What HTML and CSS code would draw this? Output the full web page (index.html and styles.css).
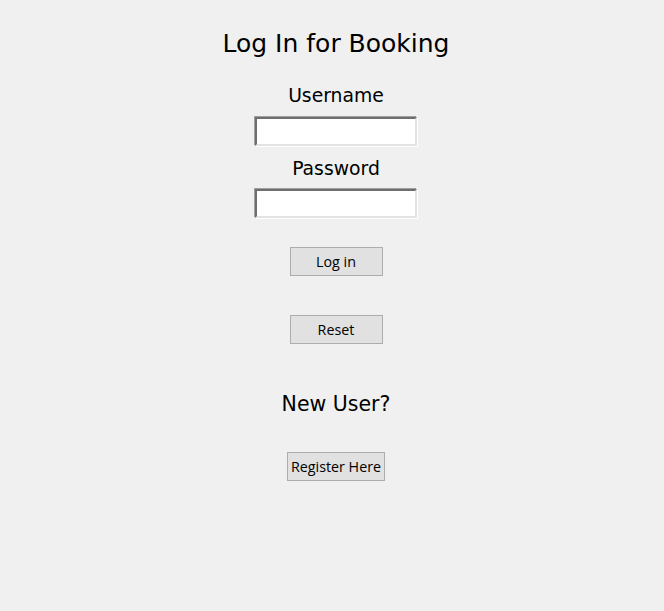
FILE: index.html
```html
<!DOCTYPE html>
<html>
<head>
<meta charset="utf-8">
<link rel="stylesheet" href="styles.css">
</head>
<body>
<div class="form">
  <div class="title">Log In for Booking</div>
  <div class="label user-label">Username</div>
  <input class="entry user-entry" type="text">
  <div class="label pass-label">Password</div>
  <input class="entry pass-entry" type="password">
  <button class="btn login">Log in</button>
  <button class="btn reset">Reset</button>
  <div class="newuser">New User?</div>
  <button class="btn register">Register Here</button>
</div>
</body>
</html>
```
FILE: styles.css
```css
html, body {
  margin: 0;
  padding: 0;
  background: #f0f0f0;
  height: 100%;
}
.form {
  display: flex;
  flex-direction: column;
  align-items: center;
  padding-top: 29px;
  padding-left: 8px;
  font-family: "DejaVu Sans", Verdana, sans-serif;
  color: #000;
}
.title {
  font-size: 25px;
  line-height: 30px;
  height: 30px;
}
.label {
  font-size: 18.8px;
  line-height: 22px;
  height: 22px;
}
.user-label { margin-top: 25px; padding-top: 1px; }
.pass-label { margin-top: 11px; padding-top: 1px; }
.label { box-sizing: content-box; height: 21px; }
.entry {
  box-sizing: border-box;
  width: 162px;
  height: 29px;
  padding: 0;
  background: #fff;
  border-style: solid;
  border-width: 2px 2px 2px 2px;
  border-color: #6e6e6e #e3e3e3 #e3e3e3 #6e6e6e;
  box-shadow: -1px -1px 0 #a0a0a0, 1px 1px 0 #ffffff;
  outline: none;
}
.user-entry { margin-top: 11px; }
.pass-entry { margin-top: 10px; }
.btn {
  box-sizing: border-box;
  width: 93px;
  height: 29px;
  padding: 0;
  background: #e1e1e1;
  border: 1px solid #adadad;
  font-family: "Open Sans", "Noto Sans", sans-serif;
  font-size: 14.3px;
  color: #000;
}
.login { margin-top: 29px; }
.reset { margin-top: 39px; }
.newuser {
  margin-top: 47px;
  font-size: 20.5px;
  line-height: 26px;
  height: 26px;
}
.register {
  width: 98px;
  margin-top: 35px;
}
```
